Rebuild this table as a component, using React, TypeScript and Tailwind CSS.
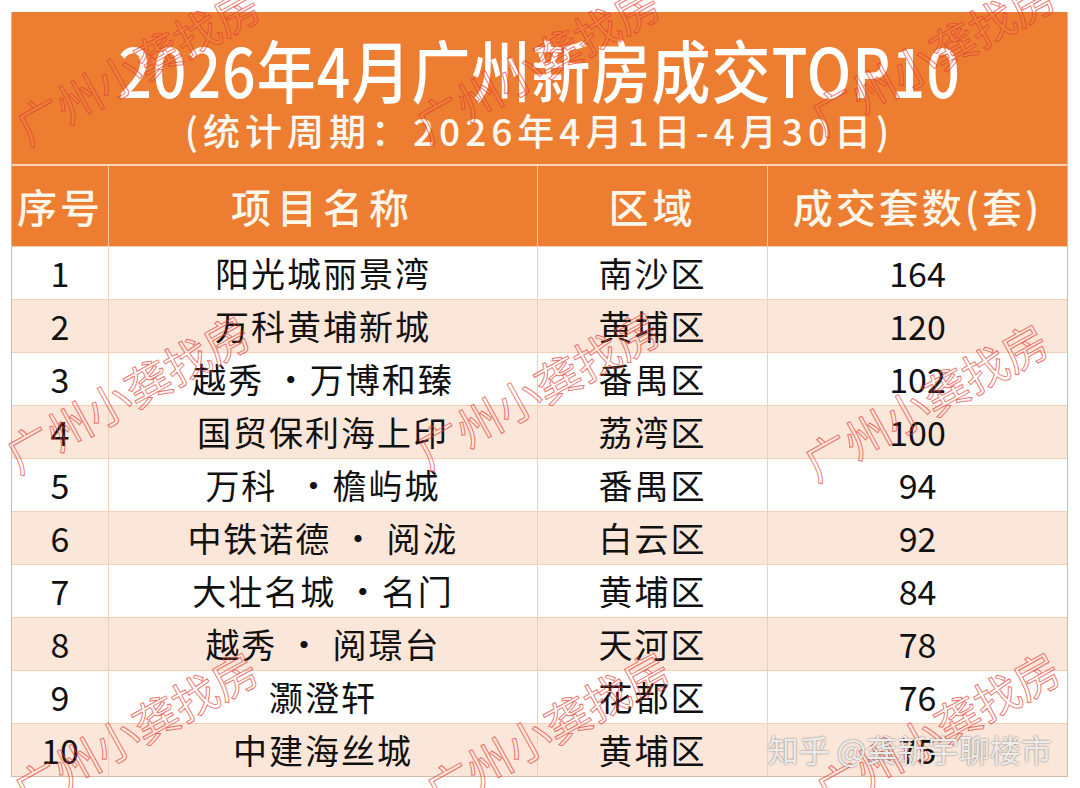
import React from "react";

const rows = [
  ["1", "阳光城丽景湾", "南沙区", "164"],
  ["2", "万科黄埔新城", "黄埔区", "120"],
  ["3", "越秀 ・万博和臻", "番禺区", "102"],
  ["4", "国贸保利海上印", "荔湾区", "100"],
  ["5", "万科  ・檐屿城", "番禺区", "94"],
  ["6", "中铁诺德 ・ 阅泷", "白云区", "92"],
  ["7", "大壮名城 ・名门", "黄埔区", "84"],
  ["8", "越秀 ・ 阅璟台", "天河区", "78"],
  ["9", "灏澄轩", "花都区", "76"],
  ["10", "中建海丝城", "黄埔区", "75"],
];

// watermark centres, roughly a 3x3 grid over the table
const marks = [
  [137, 64], [537, 62], [932, 54],
  [127, 392], [537, 388], [925, 400],
  [135, 728], [547, 728], [937, 728],
];

const font = "font-['Noto_Sans_CJK_SC','Noto_Sans',sans-serif]";

export default function App() {
  return (
    <div className={`relative w-[1080px] h-[788px] overflow-hidden bg-white ${font}`}>
      <div className="pt-[12px] pl-[11px]">
        <div className="w-[1057px] border-l border-b border-r border-[#d8bba4]">
          {/* Title band */}
          <div className="h-[152px] bg-[#ED7D31] flex flex-col items-center pt-[18px] text-white">
            <div className="h-[76px] flex items-center text-[59px] font-medium leading-none tracking-[1px] scale-y-[1.15]">
              2026年4月广州新房成交TOP10
            </div>
            <div className="h-[48px] flex items-center text-[37px] font-medium leading-none tracking-[5px] text-[#fff8f0]">
              (统计周期：2026年4月1日-4月30日)
            </div>
          </div>
          <div className="h-[2px] bg-[#f8d3b8]" />

          {/* Header row */}
          <div className="grid grid-cols-[97px_429px_230px_299px] h-[80px] bg-[#ED7D31] text-[#fff6ea] text-[40px] font-medium leading-none">
            <div className="flex items-center justify-center border-r border-[#f6c9a8] tracking-[3px]">序号</div>
            <div className="flex items-center justify-center border-r border-[#f6c9a8] tracking-[6px]">项目名称</div>
            <div className="flex items-center justify-center border-r border-[#f6c9a8] tracking-[4px]">区域</div>
            <div className="flex items-center justify-center tracking-[3px]">成交套数(套)</div>
          </div>

          {/* Data rows */}
          {rows.map((r, i) => (
            <div
              key={r[0]}
              className={`grid grid-cols-[97px_429px_230px_299px] h-[53px] border-t border-[#f3d0b6] text-[34px] leading-none text-[#111] ${
                i % 2 === 1 ? "bg-[#fbe6da]" : "bg-white"
              }`}
            >
              <div className="flex items-center justify-center border-r border-[#ecd0ba]">{r[0]}</div>
              <div className="flex items-center justify-center border-r border-[#ecd0ba] tracking-[2px] whitespace-pre">{r[1]}</div>
              <div className="flex items-center justify-center border-r border-[#ecd0ba] tracking-[2px]">{r[2]}</div>
              <div className="flex items-center justify-center">{r[3]}</div>
            </div>
          ))}
        </div>
      </div>

      {/* Red outline watermarks */}
      {marks.map(([x, y], i) => (
        <div
          key={i}
          className="absolute pointer-events-none text-[45px] leading-none whitespace-nowrap text-[rgba(255,255,255,0.05)] [-webkit-text-stroke:1px_rgba(225,60,50,0.7)] -translate-x-1/2 -translate-y-1/2 -rotate-[29deg]"
          style={{ left: x, top: y }}
        >
          广州小龚找房
        </div>
      ))}

      {/* Platform watermark */}
      <div className="absolute right-[28px] top-[733px] text-[31px] leading-none text-[#ececec] [text-shadow:0_0_2px_rgba(0,0,0,0.55)] pointer-events-none">
        知乎 @龚新宇聊楼市
      </div>
    </div>
  );
}
